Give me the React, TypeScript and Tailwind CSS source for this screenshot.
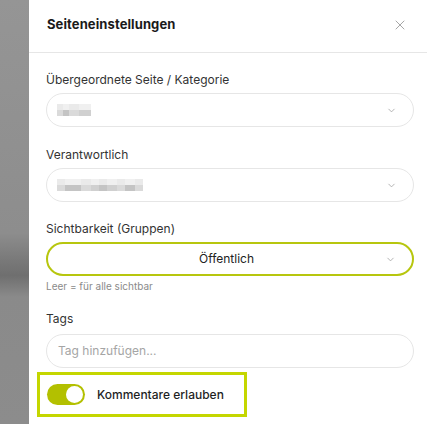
import { X, ChevronDown } from "lucide-react";

function Label({ children }: { children: React.ReactNode }) {
  return <div className="text-[12px] leading-[16px] text-[#333]">{children}</div>;
}

function Select({ children, active }: { children?: React.ReactNode; active?: boolean }) {
  return (
    <div
      className={`mt-[5px] h-[34px] rounded-full flex items-center pl-[10px] pr-[16px] bg-white ${
        active ? "border-2 border-[#b7c60e]" : "border border-[#e6e6e6]"
      }`}
    >
      <div className={`flex-1 flex items-center ${active ? "justify-center pl-[10px]" : ""}`}>{children}</div>
      <ChevronDown size={11} strokeWidth={1.6} className="text-[#9a9a9a]" />
    </div>
  );
}

function Blur({ widths }: { widths: string[] }) {
  return (
    <div className="flex flex-col">
      <div className="flex h-[6px]">
        {widths.map((w, i) => (
          <div key={i} className={`${w} ${i % 2 ? "bg-[#f0f0f0]" : "bg-[#eaeaea]"}`} />
        ))}
      </div>
      <div className="flex h-[6px]">
        {widths.map((w, i) => (
          <div key={i} className={`${w} ${i % 3 === 1 ? "bg-[#c4c4c4]" : i % 2 ? "bg-[#d0d0d0]" : "bg-[#dadada]"}`} />
        ))}
      </div>
    </div>
  );
}

export default function App() {
  return (
    <div
      className="flex w-[427px] h-[424px] overflow-hidden bg-white"
      style={{ fontFamily: "Inter, 'Noto Sans', sans-serif" }}
    >
      <div className="w-[29px] shrink-0 bg-[linear-gradient(to_bottom,#959595_0%,#8d8d8d_55%,#777_62%,#6f6f6f_65%,#8a8a8a_70%,#8c8c8c_100%)]" />
      <div className="flex-1 flex flex-col">
        <div className="h-[53px] shrink-0 border-b border-[#e6e6e6] flex items-center pl-[18px] pr-[19px] pb-[2px]">
          <div className="flex-1 text-[13px] font-bold text-[#1a1a1a] tracking-[0.1px]">Seiteneinstellungen</div>
          <X size={16} strokeWidth={1.2} className="text-[#8f8f8f]" />
        </div>
        <div className="flex flex-col pl-[17px] pr-[13px] pt-[19px]">
          <Label>Übergeordnete Seite / Kategorie</Label>
          <Select>
            <Blur widths={["w-[6px]", "w-[6px]", "w-[10px]", "w-[12px]"]} />
          </Select>

          <div className="mt-[20px]">
            <Label>Verantwortlich</Label>
          </div>
          <Select>
            <Blur
              widths={["w-[8px]", "w-[16px]", "w-[10px]", "w-[8px]", "w-[8px]", "w-[10px]", "w-[8px]", "w-[10px]", "w-[8px]"]}
            />
          </Select>

          <div className="mt-[19px]">
            <Label>Sichtbarkeit (Gruppen)</Label>
          </div>
          <Select active>
            <span className="text-[12px] text-[#222]">Öffentlich</span>
          </Select>
          <div className="mt-[4px] text-[10px] leading-[13px] text-[#8a8a8a]">Leer = für alle sichtbar</div>

          <div className="mt-[18px]">
            <Label>Tags</Label>
          </div>
          <div className="mt-[7px] h-[34px] rounded-full border border-[#e6e6e6] flex items-center pl-[11px] text-[12px] text-[#a5a5a5]">
            Tag hinzufügen...
          </div>

          <div className="mt-[4px] -ml-[9px] w-[210px] h-[45px] border-[3px] border-[#c4d600] flex items-center pl-[7px] gap-[12px]">
            <div className="w-[38px] h-[21px] rounded-full bg-[#b3c000] flex items-center justify-end pr-[2px]">
              <div className="w-[17px] h-[17px] rounded-full bg-white" />
            </div>
            <span className="text-[12px] font-medium text-[#1f1f1f]">Kommentare erlauben</span>
          </div>
        </div>
      </div>
    </div>
  );
}
